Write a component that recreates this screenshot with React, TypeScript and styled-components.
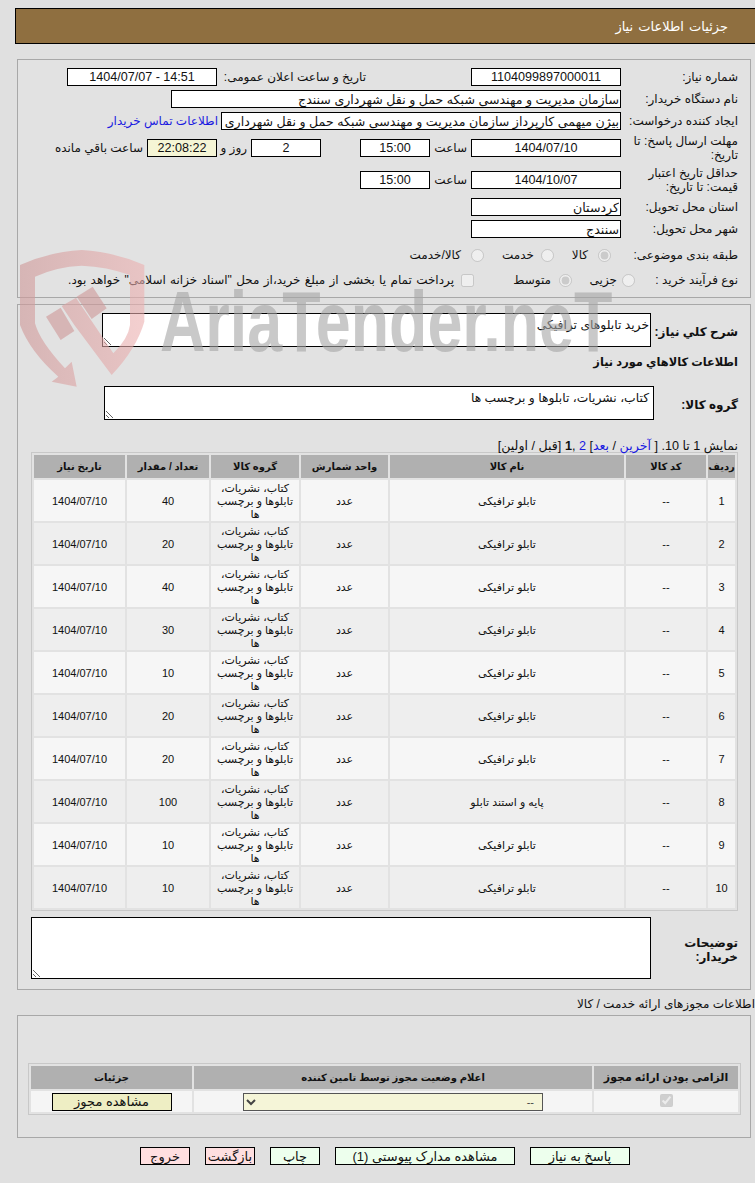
import React from 'react';
import styled, { createGlobalStyle } from 'styled-components';

const GlobalStyle = createGlobalStyle`
  html, body {
    margin: 0;
    padding: 0;
    background: #e0e0e0;
  }
  body {
    direction: rtl;
    font-family: "Liberation Sans", "DejaVu Sans", sans-serif;
    font-size: 12px;
    color: #111;
  }
`;

const Page = styled.div`
  position: relative;
  width: 755px;
  height: 1183px;
  overflow: hidden;
  padding-top: 8px;
  box-sizing: border-box;
`;

const Header = styled.div`
  margin-left: 15px;
  height: 36px;
  box-sizing: border-box;
  border: 1px solid #000;
  border-right: 0;
  background: #8f6f40;
  color: #fff;
  font-size: 13px;
  word-spacing: 1.5px;
  display: flex;
  align-items: center;
  padding-right: 27px;
`;

const Panel = styled.div<{ $top: number; $bottom: number; $inset?: number }>`
  margin: ${p => p.$top}px 4px 0 17px;
  padding: ${p => p.$inset ?? 0}px 12px ${p => p.$bottom}px 0;
  border: 1px solid #a8a8a8;
  background: #e2e2e2;
`;

const Row = styled.div<{ $h: number; $mt?: number }>`
  display: flex;
  align-items: center;
  height: ${p => p.$h}px;
  margin-top: ${p => p.$mt ?? 0}px;
`;

const Label = styled.div<{ $w?: number; $bold?: boolean; $line?: boolean }>`
  flex: none;
  width: ${p => (p.$w ? `${p.$w}px` : 'auto')};
  margin-top: ${p => (p.$bold ? 4 : 0)}px;
  font-weight: ${p => (p.$bold ? 'bold' : 'normal')};
  font-size: 12px;
  line-height: 14px;
  white-space: ${p => (p.$w && !p.$line ? 'normal' : 'nowrap')};
`;

const PaymentNote = styled(Label)`
  word-spacing: 1px;
`;

const Gap = styled.span<{ $w: number }>`
  flex: none;
  width: ${p => p.$w}px;
`;

const Field = styled.input<{ $w: number; $center?: boolean; $tint?: boolean }>`
  flex: none;
  width: ${p => p.$w}px;
  height: 18px;
  box-sizing: border-box;
  border: 1px solid #000;
  padding: 0 1px;
  margin: 0;
  background: ${p => (p.$tint ? '#f5f5d5' : '#fff')};
  color: #111;
  font: 12.6px "Liberation Sans", "DejaVu Sans", sans-serif;
  text-align: ${p => (p.$center ? 'center' : 'right')};
  direction: rtl;
  outline: none;
`;

const ContactLink = styled.a`
  color: #1a1ae0;
  text-decoration: none;
  white-space: nowrap;
  margin-right: 3px;
`;

const Choice = styled.input`
  flex: none;
  margin: 0;
  width: 13px;
  height: 13px;
`;

const Note = styled.div`
  font-weight: bold;
  font-size: 11.4px;
  margin-top: 6px;
  line-height: 18px;
`;

const NoteBox = styled.textarea<{ $w: number; $h: number; $pad?: number }>`
  display: block;
  flex: none;
  width: ${p => p.$w}px;
  height: ${p => p.$h}px;
  box-sizing: border-box;
  border: 1px solid #000;
  padding: 4px ${p => p.$pad ?? 1}px 0;
  margin: 0;
  background: #fff;
  color: #111;
  font: 12.3px "Liberation Sans", "DejaVu Sans", sans-serif;
  outline: none;
`;

const Paging = styled.div`
  margin-top: 20px;
  height: 12px;
  font-size: 12.6px;
  line-height: 13px;
  white-space: nowrap;
  a {
    color: #1a1ae0;
    text-decoration: none;
  }
`;

const Grid = styled.table<{ $w: number; $mt?: number; $pull?: number }>`
  width: ${p => p.$w}px;
  margin-top: ${p => p.$mt ?? 0}px;
  margin-right: ${p => p.$pull ?? 0}px;
  table-layout: fixed;
  border-collapse: separate;
  border-spacing: 2px;
  border: 1px solid #c8c8c8;
  font-size: 11px;
  td {
    padding: 0;
    text-align: center;
    line-height: 13px;
  }
`;

const HeadCell = styled.th<{ $size?: number }>`
  background: #b0b0b0;
  height: 23px;
  padding: 0;
  font-size: ${p => p.$size ?? 10}px;
  font-weight: bold;
  text-align: center;
  color: #111;
  white-space: nowrap;
`;

const ItemRow = styled.tr<{ $alt: boolean }>`
  td {
    height: 41px;
    padding-top: 1px;
    box-sizing: border-box;
    background: ${p => (p.$alt ? '#eeeeee' : '#f6f6f6')};
  }
`;

const GroupCell = styled.td`
  padding: 1px 4px 0 !important;
`;

const LicenseRow = styled.tr`
  td {
    height: 21px;
    background: #f5f5f5;
  }
`;

const SectionTitle = styled.div`
  margin-top: 7px;
  height: 14px;
  line-height: 14px;
`;

const StateSelect = styled.select`
  display: block;
  width: 300px;
  height: 18px;
  margin: 0 auto;
  padding: 0 4px;
  box-sizing: border-box;
  border: 1px solid #555;
  border-radius: 0;
  background: #f5f5d8;
  color: #444;
  font: 11px "Liberation Sans", "DejaVu Sans", sans-serif;
`;

const Btn = styled.button<{ $w: number; $tone: 'green' | 'red' | 'khaki' }>`
  flex: none;
  width: ${p => p.$w}px;
  height: 18px;
  box-sizing: border-box;
  margin: 0;
  padding: 0;
  border: 1px solid #000;
  background: ${p =>
    p.$tone === 'green' ? '#edffed' : p.$tone === 'red' ? '#ffdfe0' : '#eeeec4'};
  color: #111;
  font: 13px "Liberation Sans", "DejaVu Sans", sans-serif;
  white-space: nowrap;
  vertical-align: middle;
`;

const Actions = styled.div`
  display: flex;
  justify-content: center;
  gap: 15px;
  margin: 9px 0 0 15px;
`;

const WatermarkLogo = styled.svg`
  position: absolute;
  left: 10px;
  top: 245px;
  width: 150px;
  height: 150px;
  pointer-events: none;
`;

const WatermarkText = styled.div`
  position: absolute;
  left: 160px;
  top: 278px;
  direction: ltr;
  font: bold 86px/86px "Liberation Sans", sans-serif;
  color: rgba(165, 165, 165, 0.6);
  white-space: nowrap;
  transform-origin: left top;
  transform: scaleX(0.73);
  pointer-events: none;
`;

const items = [
  ['تابلو ترافیکی', '40'],
  ['تابلو ترافیکی', '20'],
  ['تابلو ترافیکی', '40'],
  ['تابلو ترافیکی', '30'],
  ['تابلو ترافیکی', '10'],
  ['تابلو ترافیکی', '20'],
  ['تابلو ترافیکی', '20'],
  ['پایه و استند تابلو', '100'],
  ['تابلو ترافیکی', '10'],
  ['تابلو ترافیکی', '10'],
];

export default function App() {
  return (
    <Page>
      <GlobalStyle />
      <Header>جزئیات اطلاعات نیاز</Header>

      <Panel $top={15} $bottom={7} $inset={6}>
        <Row $h={22}>
          <Label $w={117}>شماره نیاز:</Label>
          <Field $w={150} $center readOnly value="1104099897000011" />
          <Gap $w={105} />
          <Label $w={145} $line>تاریخ و ساعت اعلان عمومی:</Label>
          <Gap $w={4} />
          <Field $w={150} $center readOnly value="14:51 - 1404/07/07" />
        </Row>
        <Row $h={22}>
          <Label $w={117}>نام دستگاه خریدار:</Label>
          <Field $w={450} readOnly value="سازمان مدیریت و مهندسی شبکه حمل و نقل شهرداری سنندج" />
        </Row>
        <Row $h={22}>
          <Label $w={117}>ایجاد کننده درخواست:</Label>
          <Field $w={400} readOnly value="بیژن میهمی کارپرداز سازمان مدیریت و مهندسی شبکه حمل و نقل شهرداری سنندج" />
          <ContactLink href="#">اطلاعات تماس خریدار</ContactLink>
        </Row>
        <Row $h={32}>
          <Label $w={117}>مهلت ارسال پاسخ: تا تاریخ:</Label>
          <Field $w={150} $center readOnly value="1404/07/10" />
          <Gap $w={4} />
          <Label $w={34} $line>ساعت</Label>
          <Gap $w={3} />
          <Field $w={70} $center readOnly value="15:00" />
          <Gap $w={39} />
          <Field $w={70} $center readOnly value="2" />
          <Gap $w={4} />
          <Label $w={23} $line>روز و</Label>
          <Gap $w={7} />
          <Field $w={70} $center $tint readOnly value="22:08:22" />
          <Gap $w={4} />
          <Label>ساعت باقي مانده</Label>
        </Row>
        <Row $h={32}>
          <Label $w={117}>حداقل تاریخ اعتبار قیمت: تا تاریخ:</Label>
          <Field $w={150} $center readOnly value="1404/10/07" />
          <Gap $w={4} />
          <Label $w={34} $line>ساعت</Label>
          <Gap $w={3} />
          <Field $w={70} $center readOnly value="15:00" />
        </Row>
        <Row $h={22}>
          <Label $w={117}>استان محل تحویل:</Label>
          <Field $w={150} readOnly value="کردستان" />
        </Row>
        <Row $h={22}>
          <Label $w={117}>شهر محل تحویل:</Label>
          <Field $w={150} readOnly value="سنندج" />
        </Row>
        <Row $h={30}>
          <Label $w={127}>طبقه بندی موضوعی:</Label>
          <Choice type="radio" name="subject" disabled defaultChecked />
          <Gap $w={10} />
          <Label $w={34}>کالا</Label>
          <Choice type="radio" name="subject" disabled />
          <Gap $w={7} />
          <Label $w={50}>خدمت</Label>
          <Choice type="radio" name="subject" disabled />
          <Gap $w={10} />
          <Label>کالا/خدمت</Label>
        </Row>
        <Row $h={20}>
          <Label $w={103}>نوع فرآیند خرید :</Label>
          <Choice type="radio" name="process" disabled />
          <Gap $w={5} />
          <Label $w={45}>جزیی</Label>
          <Choice type="radio" name="process" disabled defaultChecked />
          <Gap $w={8} />
          <Label $w={77}>متوسط</Label>
          <Choice type="checkbox" disabled />
          <Gap $w={7} />
          <PaymentNote>پرداخت تمام یا بخشی از مبلغ خرید،از محل "اسناد خزانه اسلامی" خواهد بود.</PaymentNote>
        </Row>
      </Panel>

      <Panel $top={6} $bottom={10} $inset={8}>
        <Row $h={34}>
          <Label $w={87} $bold>شرح كلي نياز:</Label>
          <NoteBox $w={549} $h={34} readOnly value="خرید تابلوهای ترافیکی" />
        </Row>
        <Note>اطلاعات كالاهاي مورد نياز</Note>
        <Row $h={34} $mt={15}>
          <Label $w={84} $bold>گروه کالا:</Label>
          <NoteBox $w={550} $h={34} $pad={4} readOnly value="کتاب، نشریات، تابلوها و برچسب ها" />
        </Row>
        <Paging>
          نمایش 1 تا 10. [ <a href="#">آخرین</a> / <a href="#">بعد</a>] <a href="#">2</a> ,<b>1</b> [قبل / اولین]
        </Paging>
        <Grid $w={707}>
          <colgroup>
            <col width={27} />
            <col width={80} />
            <col width={234} />
            <col width={87} />
            <col width={88} />
            <col width={82} />
            <col width={91} />
          </colgroup>
          <thead>
            <tr>
              <HeadCell>ردیف</HeadCell>
              <HeadCell>کد کالا</HeadCell>
              <HeadCell>نام کالا</HeadCell>
              <HeadCell>واحد شمارش</HeadCell>
              <HeadCell>گروه کالا</HeadCell>
              <HeadCell>تعداد / مقدار</HeadCell>
              <HeadCell>تاریخ نیاز</HeadCell>
            </tr>
          </thead>
          <tbody>
            {items.map(([name, qty], i) => (
              <ItemRow key={i} $alt={i % 2 === 1}>
                <td>{i + 1}</td>
                <td>--</td>
                <td>{name}</td>
                <td>عدد</td>
                <GroupCell>کتاب، نشریات، تابلوها و برچسب ها</GroupCell>
                <td>{qty}</td>
                <td>1404/07/10</td>
              </ItemRow>
            ))}
          </tbody>
        </Grid>
        <Row $h={62} $mt={6}>
          <Label $w={87} $bold>توضیحات خریدار:</Label>
          <NoteBox $w={620} $h={62} readOnly value="" />
        </Row>
      </Panel>

      <SectionTitle>اطلاعات مجوزهای ارائه خدمت / کالا</SectionTitle>

      <Panel $top={4} $bottom={22}>
        <Grid $w={713} $mt={47} $pull={-3}>
          <colgroup>
            <col width={144} />
            <col width={398} />
            <col width={161} />
          </colgroup>
          <thead>
            <tr>
              <HeadCell $size={11}>الزامی بودن ارائه مجوز</HeadCell>
              <HeadCell>اعلام وضعیت مجوز توسط تامین کننده</HeadCell>
              <HeadCell>جزئیات</HeadCell>
            </tr>
          </thead>
          <tbody>
            <LicenseRow>
              <td>
                <Choice type="checkbox" disabled defaultChecked />
              </td>
              <td>
                <StateSelect defaultValue="--">
                  <option>--</option>
                </StateSelect>
              </td>
              <td>
                <Btn $w={120} $tone="khaki">مشاهده مجوز</Btn>
              </td>
            </LicenseRow>
          </tbody>
        </Grid>
      </Panel>

      <Actions>
        <Btn $w={100} $tone="green">پاسخ به نیاز</Btn>
        <Btn $w={180} $tone="green">مشاهده مدارک پیوستی (1)</Btn>
        <Btn $w={50} $tone="green">چاپ</Btn>
        <Btn $w={50} $tone="red">بازگشت</Btn>
        <Btn $w={50} $tone="red">خروج</Btn>
      </Actions>

      <WatermarkLogo viewBox="0 0 450 450">
        <defs>
          <linearGradient id="wm" x1="0" x2="1" y1="0" y2="0">
            <stop offset="0" stopColor="#cf9a9a" stopOpacity="0.62" />
            <stop offset="1" stopColor="#ecb0b0" stopOpacity="0.6" />
          </linearGradient>
        </defs>
        <path
          fill="url(#wm)"
          d="M215 15 Q310 20 403 60 V230 Q380 310 305 390 L193 240 L155 183 L198 158 L310 325 Q355 280 360 240 V90 Q290 65 215 62 Q140 65 75 95 V235 Q90 290 165 370 L185 350 L200 425 L125 410 L145 395 Q60 320 30 240 V60 Q120 20 215 15 Z"
        />
        <path fill="#cf9a9a" fillOpacity="0.62" d="M108 215 L152 188 L193 258 L152 285 Z" />
        <path fill="#cf9a9a" fillOpacity="0.62" d="M200 155 L248 125 L290 190 L245 222 Z" />
      </WatermarkLogo>
      <WatermarkText>AriaTender.neT</WatermarkText>
    </Page>
  );
}
